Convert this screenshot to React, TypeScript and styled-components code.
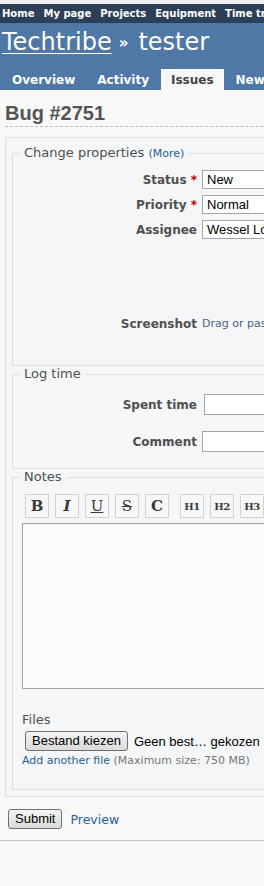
import styled, { createGlobalStyle } from "styled-components";

const GlobalStyle = createGlobalStyle`
  html, body {
    margin: 0;
    padding: 0;
    overflow: hidden;
    background: #f8f8f8;
  }
  body {
    font-family: "DejaVu Sans", Verdana, sans-serif;
    font-size: 12px;
    color: #333;
  }
`;

const Page = styled.div`
  width: 980px;
`;

const BrowserStrip = styled.div`
  height: 4px;
  background: #eceef0;
`;

const TopMenu = styled.nav`
  height: 19px;
  background: #2c3f56;
  display: flex;
  align-items: center;
  gap: 9px;
  padding-left: 2px;
`;

const TopLink = styled.a`
  color: #fff;
  font-size: 10px;
  font-weight: bold;
  text-decoration: none;
  white-space: nowrap;
`;

const Header = styled.header`
  height: 67px;
  box-sizing: border-box;
  padding-top: 5px;
  background-color: #4e77a5;
  background-image: radial-gradient(rgba(255, 255, 255, 0.07) 1px, transparent 1px);
  background-size: 3px 3px;
  display: flex;
  flex-direction: column;
`;

const Title = styled.h1`
  margin: 0;
  padding-left: 2px;
  font-size: 24px;
  font-weight: normal;
  line-height: 28px;
  color: #fff;
  white-space: nowrap;

  a {
    color: #fff;
    text-decoration: underline;
    text-decoration-thickness: 1px;
    text-underline-offset: 3px;
  }
`;

const Sep = styled.span`
  font-size: 15px;
  font-weight: bold;
  margin: 0 10px 0 7px;
  vertical-align: 2px;
`;

const Tabs = styled.ul`
  list-style: none;
  margin: 12px 0 0;
  padding: 0 0 0 2px;
  display: flex;
  gap: 2px;
`;

const Tab = styled.li<{ $selected?: boolean }>`
  height: 22px;
  line-height: 23px;
  padding: 0 10px;
  font-size: 12px;
  font-weight: bold;
  white-space: nowrap;
  color: ${(p) => (p.$selected ? "#444" : "#fff")};
  background: ${(p) => (p.$selected ? "#f8f8f8" : "transparent")};
`;

const Content = styled.main`
  padding: 11px 5px 0;
`;

const Heading = styled.h2`
  margin: 0 0 10px;
  padding-bottom: 1px;
  font-family: "Liberation Sans", Arial, sans-serif;
  font-size: 20px;
  line-height: 24px;
  font-weight: bold;
  color: #555;
  border-bottom: 1px dashed #bbb;
`;

const Box = styled.div`
  border: 1px solid #dedede;
  background: #f4f6f7;
  padding: 7px 0 6px 6px;
`;

const Fieldset = styled.fieldset<{ $bottom?: number; $top?: number }>`
  margin: 0;
  min-width: 0;
  border: 1px solid #dcdcdc;
  padding: ${(p) => p.$top ?? 0}px 6px ${(p) => p.$bottom ?? 0}px;
`;

const Legend = styled.legend`
  padding: 0 5px;
  font-size: 13px;
  line-height: 16px;
  color: #505050;
`;

const MoreLink = styled.a`
  font-size: 11px;
  color: #2a5d96;
  text-decoration: none;
`;

const Row = styled.div<{ $height: number; $space?: number }>`
  display: grid;
  grid-template-columns: 178px auto;
  column-gap: 5px;
  align-items: center;
  height: ${(p) => p.$height}px;
  margin-top: ${(p) => p.$space ?? 0}px;
`;

const Label = styled.label`
  text-align: right;
  font-weight: bold;
  font-size: 12px;
  color: #505050;
  white-space: nowrap;
`;

const Required = styled.span`
  color: #bb0000;
`;

const Select = styled.select`
  appearance: none;
  width: 220px;
  height: 19px;
  box-sizing: border-box;
  border: 1px solid #a5a5a5;
  border-radius: 0;
  background: #fff;
  padding: 0 0 0 4px;
  font-family: "Liberation Sans", Arial, sans-serif;
  font-size: 13px;
  color: #000;
`;

const TextInput = styled.input<{ $offset?: number }>`
  width: 200px;
  height: 21px;
  box-sizing: border-box;
  margin: 0 0 0 ${(p) => p.$offset ?? 0}px;
  border: 1px solid #a5a5a5;
  background: #fff;
`;

const Hint = styled.span`
  font-size: 11px;
  color: #4d6383;
  white-space: nowrap;
`;

const Toolbar = styled.div`
  display: flex;
  gap: 6px;
  margin: 9px 0 0 6px;
`;

const ToolButton = styled.button<{ $gapBefore?: boolean }>`
  width: 24px;
  height: 24px;
  padding: 0;
  margin-left: ${(p) => (p.$gapBefore ? 5 : 0)}px;
  border: 1px solid #d2d2d2;
  background: #f7f7f7;
  font-family: "DejaVu Serif", "Liberation Serif", serif;
  font-weight: bold;
  font-size: 15px;
  color: #3a3a3a;
  display: flex;
  align-items: center;
  justify-content: center;
`;

const Small = styled.span`
  font-size: 10px;
  letter-spacing: -0.5px;
`;

const Textarea = styled.textarea`
  display: block;
  width: 700px;
  height: 166px;
  box-sizing: border-box;
  margin: 5px 0 0 3px;
  border: 1px solid #a3a3a3;
  background: #fbfbfb;
  resize: none;
`;

const FilesLabel = styled.div`
  margin: 23px 0 0 3px;
  font-size: 13px;
  line-height: 16px;
  color: #505050;
`;

const FileRow = styled.div`
  display: flex;
  align-items: center;
  gap: 6px;
  margin: 3px 0 0 6px;
  font-family: "Liberation Sans", Arial, sans-serif;
  font-size: 13px;
  color: #000;
`;

const NativeButton = styled.button`
  height: 20px;
  padding: 0 6px;
  border: 1px solid #707070;
  border-radius: 3px;
  background: linear-gradient(#f4f4f4, #dadada);
  font-family: "Liberation Sans", Arial, sans-serif;
  font-size: 13px;
  line-height: 18px;
  color: #000;
`;

const FileHint = styled.div`
  margin: 3px 0 0 3px;
  font-size: 11px;
  line-height: 13px;
  color: #777;
  white-space: nowrap;

  a {
    color: #2a5d96;
    text-decoration: none;
  }
`;

const Actions = styled.div`
  display: flex;
  align-items: center;
  gap: 8px;
  margin: 12px 0 0 3px;
`;

const PreviewLink = styled.a`
  font-size: 12.5px;
  color: #2a5d96;
  text-decoration: none;
`;

const Divider = styled.hr`
  margin: 11px 0 0;
  border: 0;
  border-top: 1px solid #c4c4c4;
`;

export default function App() {
  return (
    <Page>
      <GlobalStyle />
      <BrowserStrip />
      <TopMenu>
        {["Home", "My page", "Projects", "Equipment", "Time tracking", "Help"].map((item) => (
          <TopLink key={item} href="#">
            {item}
          </TopLink>
        ))}
      </TopMenu>
      <Header>
        <Title>
          <a href="#">Techtribe</a>
          <Sep>»</Sep>tester
        </Title>
        <Tabs>
          <Tab>Overview</Tab>
          <Tab>Activity</Tab>
          <Tab $selected>Issues</Tab>
          <Tab>New issue</Tab>
          <Tab>Gantt</Tab>
          <Tab>Calendar</Tab>
        </Tabs>
      </Header>
      <Content>
        <Heading>Bug #2751</Heading>
        <Box>
          <Fieldset $top={5} $bottom={29}>
            <Legend>
              Change properties <MoreLink href="#">(More)</MoreLink>
            </Legend>
            <Row $height={25}>
              <Label>
                Status <Required>*</Required>
              </Label>
              <Select defaultValue="New">
                <option>New</option>
              </Select>
            </Row>
            <Row $height={25}>
              <Label>
                Priority <Required>*</Required>
              </Label>
              <Select defaultValue="Normal">
                <option>Normal</option>
              </Select>
            </Row>
            <Row $height={25}>
              <Label>Assignee</Label>
              <Select defaultValue="Wessel Loth">
                <option>Wessel Loth</option>
              </Select>
            </Row>
            <Row $height={25} $space={69}>
              <Label>Screenshot</Label>
              <Hint>Drag or paste an image here</Hint>
            </Row>
          </Fieldset>
          <Fieldset $top={4} $bottom={8}>
            <Legend>Log time</Legend>
            <Row $height={37}>
              <Label>Spent time</Label>
              <TextInput $offset={2} />
            </Row>
            <Row $height={37}>
              <Label>Comment</Label>
              <TextInput />
            </Row>
          </Fieldset>
          <Fieldset $bottom={22}>
            <Legend>Notes</Legend>
            <Toolbar>
              <ToolButton>B</ToolButton>
              <ToolButton>
                <i>I</i>
              </ToolButton>
              <ToolButton>
                <u style={{ fontWeight: "normal" }}>U</u>
              </ToolButton>
              <ToolButton>
                <s style={{ fontWeight: "normal" }}>S</s>
              </ToolButton>
              <ToolButton>C</ToolButton>
              <ToolButton $gapBefore>
                <Small>H1</Small>
              </ToolButton>
              <ToolButton>
                <Small>H2</Small>
              </ToolButton>
              <ToolButton>
                <Small>H3</Small>
              </ToolButton>
            </Toolbar>
            <Textarea />
            <FilesLabel>Files</FilesLabel>
            <FileRow>
              <NativeButton>Bestand kiezen</NativeButton>
              <span>Geen best… gekozen</span>
            </FileRow>
            <FileHint>
              <a href="#">Add another file</a> (Maximum size: 750 MB)
            </FileHint>
          </Fieldset>
        </Box>
        <Actions>
          <NativeButton>Submit</NativeButton>
          <PreviewLink href="#">Preview</PreviewLink>
        </Actions>
      </Content>
      <Divider />
    </Page>
  );
}
